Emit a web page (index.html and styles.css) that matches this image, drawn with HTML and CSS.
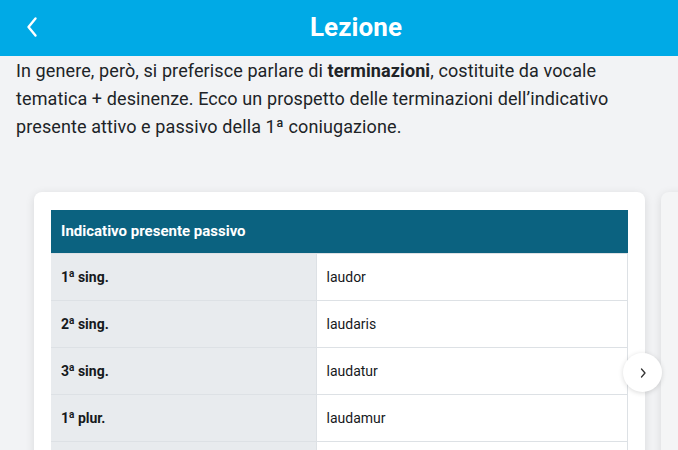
FILE: index.html
```html
<!DOCTYPE html>
<html lang="it">
<head>
<meta charset="utf-8">
<link rel="stylesheet" href="styles.css">
</head>
<body>
<header class="topbar">
  <button class="back" aria-label="Indietro">
    <svg width="14" height="22" viewBox="0 0 14 22"><path d="M10.5 2.5 L3.5 11 L10.5 19.5" fill="none" stroke="#fff" stroke-width="2.4" stroke-linecap="round" stroke-linejoin="round"/></svg>
  </button>
  <h1 class="title">Lezione</h1>
</header>
<main class="content">
  <p class="intro">In genere, però, si preferisce parlare di <strong>terminazioni</strong>, costituite da vocale tematica + desinenze. Ecco un prospetto delle terminazioni dell’indicativo presente attivo e passivo della 1ª coniugazione.</p>
  <div class="carousel">
    <div class="card">
      <table class="conj">
        <thead><tr><th colspan="2">Indicativo presente passivo</th></tr></thead>
        <tbody>
          <tr><td class="k">1<sup>a</sup> sing.</td><td class="v">laudor</td></tr>
          <tr><td class="k">2<sup>a</sup> sing.</td><td class="v">laudaris</td></tr>
          <tr><td class="k">3<sup>a</sup> sing.</td><td class="v">laudatur</td></tr>
          <tr><td class="k">1<sup>a</sup> plur.</td><td class="v">laudamur</td></tr>
          <tr><td class="k"></td><td class="v"></td></tr>
        </tbody>
      </table>
    </div>
    <div class="card next"></div>
    <button class="arrow" aria-label="Avanti">
      <svg width="10" height="12" viewBox="0 0 10 12"><path d="M3.5 2 L7 6 L3.5 10" fill="none" stroke="#333" stroke-width="1.3" stroke-linecap="round" stroke-linejoin="round"/></svg>
    </button>
  </div>
</main>
</body>
</html>
```
FILE: styles.css
```css
* { box-sizing: border-box; }
html, body { margin: 0; padding: 0; }
body {
  width: 678px;
  height: 450px;
  overflow: hidden;
  background: #f2f3f5;
  font-family: Roboto, "Noto Sans", sans-serif;
  color: #1e2226;
}
.topbar {
  height: 56px;
  background: #00aae6;
  display: flex;
  align-items: center;
  justify-content: center;
  position: relative;
}
.back {
  position: absolute;
  left: 25px;
  top: 16px;
  background: none;
  border: 0;
  padding: 0;
  width: 16px;
  height: 22px;
  display: flex;
}
.title {
  margin: 0 0 0 34px;
  color: #fff;
  font-size: 26px;
  font-weight: 700;
  letter-spacing: 0.1px;
  position: relative;
  top: -1px;
}
.content {
  padding: 0 16px;
  height: 394px;
  overflow: hidden;
}
.intro {
  margin: 0;
  padding-top: 1px;
  font-size: 18px;
  line-height: 28px;
  letter-spacing: 0.1px;
  color: #202327;
}
.intro strong { font-weight: 700; }
.carousel {
  display: flex;
  gap: 16px;
  margin-top: 51px;
  margin-left: 18px;
  position: relative;
}
.card {
  flex: 0 0 611px;
  height: 300px;
  background: #fff;
  border-radius: 8px;
  box-shadow: 0 2px 10px rgba(0,0,0,0.11);
  padding: 18px 17px;
}
.card.next {
  background: #f4f5f6;
}
.conj {
  width: 100%;
  border-collapse: collapse;
  font-size: 14px;
}
.conj th {
  background: #0b6280;
  color: #fff;
  text-align: left;
  font-weight: 700;
  font-size: 15px;
  height: 43px;
  padding: 0 10px;
}
.conj td {
  height: 47px;
  padding: 0 10px;
  border: 1px solid #dde1e5;
  color: #16191c;
}
.conj td.k {
  width: 265px;
  background: #e8ebee;
  font-weight: 700;
  border-left: 0;
}
.conj td.v { font-weight: 400; }
.conj sup { font-size: 10px; line-height: 0; vertical-align: 5px; }
.arrow {
  position: absolute;
  left: 589px;
  top: 161px;
  width: 39px;
  height: 39px;
  border-radius: 50%;
  background: #fff;
  border: 0;
  box-shadow: 0 1px 5px rgba(0,0,0,0.15);
  display: flex;
  align-items: center;
  justify-content: center;
  padding: 0;
}
```
